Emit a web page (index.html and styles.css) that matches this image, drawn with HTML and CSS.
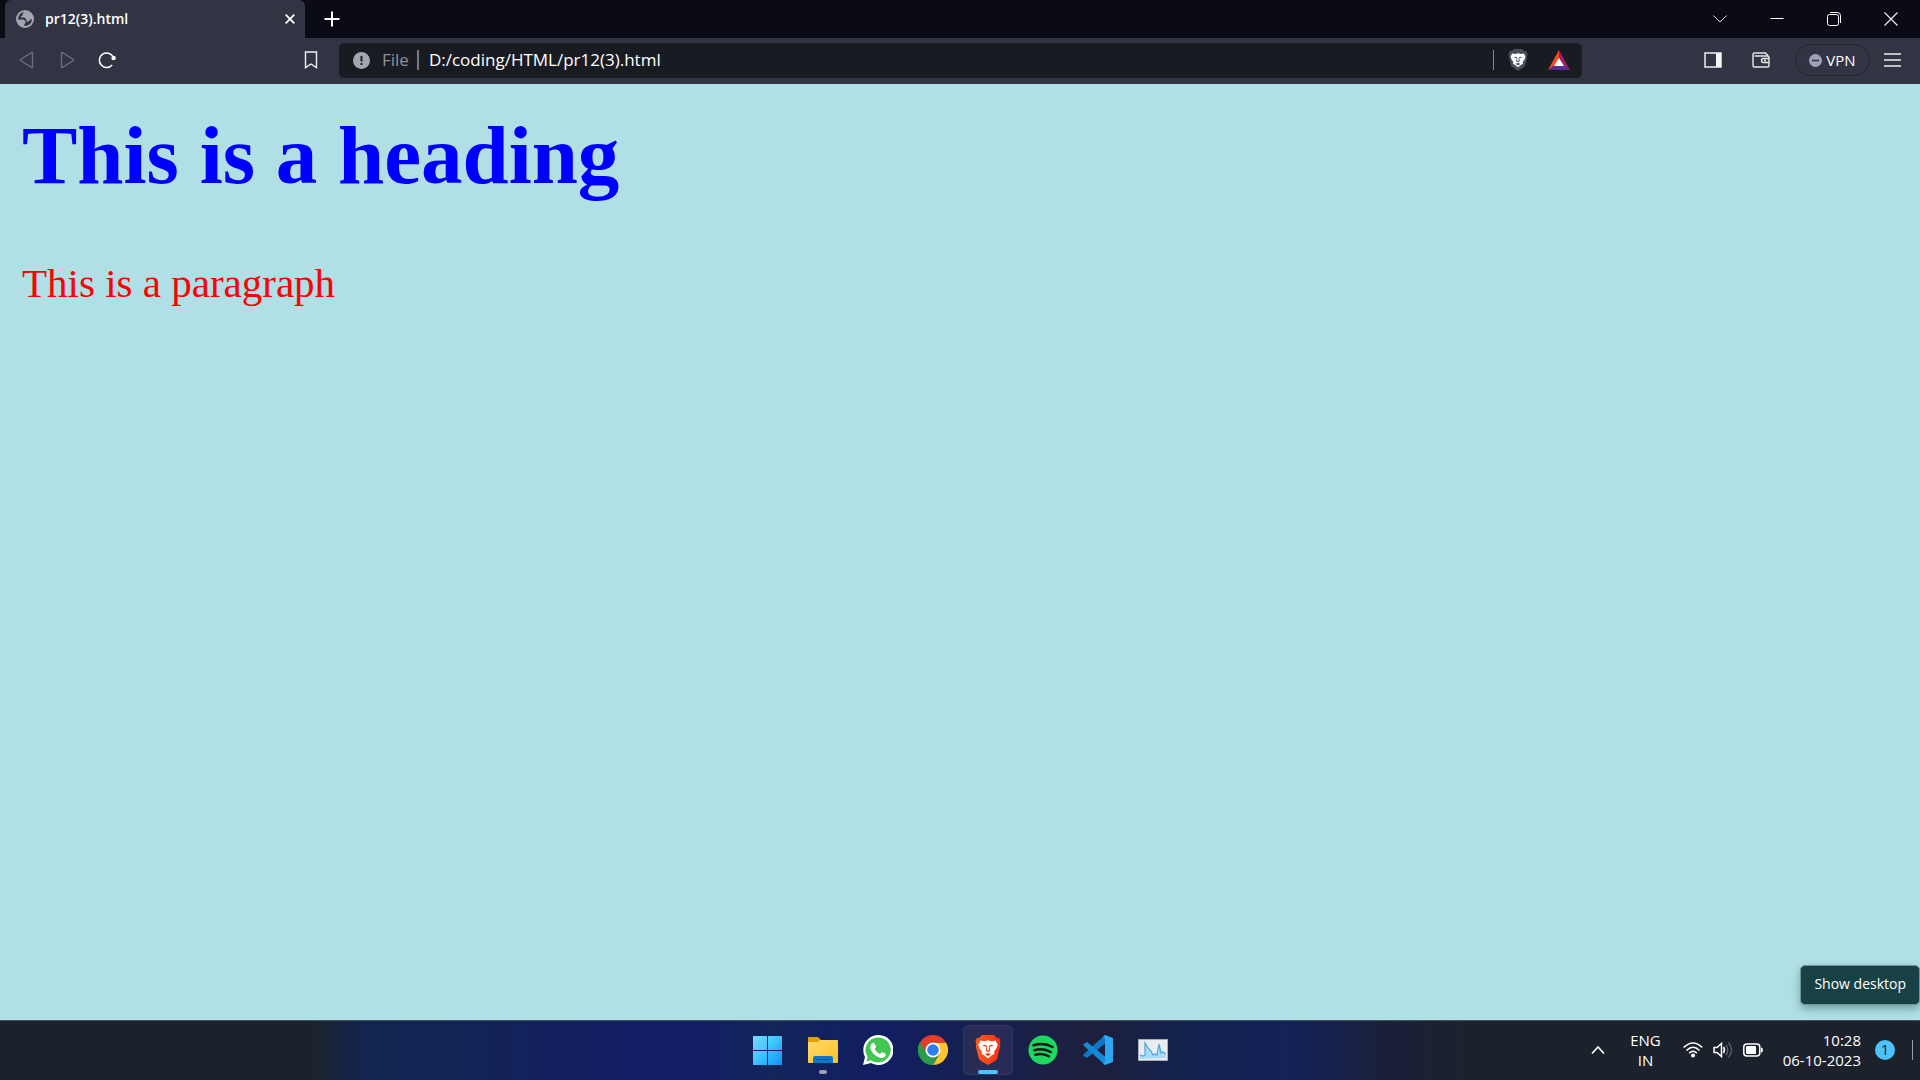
FILE: index.html
```html
<!DOCTYPE html>
<html lang="en">
<head>
<meta charset="utf-8">
<title>pr12(3).html</title>
<link rel="stylesheet" href="styles.css">
</head>
<body>
<svg class="defs" aria-hidden="true">
  <symbol id="lion" viewBox="0 0 24 24">
    <path fill="#fff" fill-rule="evenodd" d="M5 4.200 8.600 4.800 12 4 15.400 4.800 19 4.200 21 8 19.600 11.800 17.500 14.500 18 16.500 15.800 17.600 12 20.800 8.200 17.600 6 16.500 6.500 14.500 4.400 11.800 3 8ZM6.300 8.700 9.800 9.600 10.400 10.300 9.800 13.200 11.300 14.700H12.700L14.200 13.200 13.600 10.300 14.200 9.600 17.700 8.700 14.900 8 12.900 9V12.800L12 13.700 11.100 12.800V9L9.100 8ZM9 16.600 12 18.600 15 16.600 12 15.600Z"/>
  </symbol>
</svg>
<header class="browser">
  <div class="tabs">
    <div class="tab">
      <svg width="18" height="18" viewBox="0 0 18 18"><circle cx="9" cy="9" r="9" fill="#a3a5af"/><path d="M9 2 7 3 6.500 5.500 4.500 6.500 5.500 7.500H8.500L10.500 9.500V11.500H12.500L14.500 9.500 16 9A7 7 0 0 1 9 16L8 15 9 13 8.500 12H6L4.500 10.500 2 9A7 7 0 0 1 9 2Z" fill="#323443"/><path d="M4 9.500h3l2.500 1.500v2L7.500 14v2L4 14Z" fill="#a3a5af"/></svg>
      <span class="tab-title">pr12(3).html</span>
      <button class="icon" aria-label="Close tab"><svg width="10" height="10" viewBox="0 0 10 10"><path d="M.7.700 9.300 9.300M9.300.700.700 9.300" stroke="#fff" stroke-width="1.800"/></svg></button>
    </div>
    <button class="icon new-tab" aria-label="New tab"><svg width="16" height="16" viewBox="0 0 16 16"><path d="M8 .5v15M.5 8h15" stroke="#fff" stroke-width="2"/></svg></button>
    <div class="window-controls">
      <button class="icon" aria-label="Search tabs"><svg width="14" height="14" viewBox="0 0 14 14"><path d="M.5 3.500 7 10 13.500 3.500" fill="none" stroke="#ddd"/></svg></button>
      <button class="icon" aria-label="Minimize"><svg width="14" height="14" viewBox="0 0 14 14"><path d="M.5 6.500h13" stroke="#fff"/></svg></button>
      <button class="icon" aria-label="Restore"><svg width="14" height="14" viewBox="0 0 14 14"><rect x=".5" y="2.500" width="11" height="11" rx="2" fill="none" stroke="#fff"/><path d="M3 .5h7.500a3 3 0 0 1 3 3V11" fill="none" stroke="#fff"/></svg></button>
      <button class="icon" aria-label="Close"><svg width="14" height="14" viewBox="0 0 14 14"><path d="M.5.500l13 13M13.500.500l-13 13" stroke="#eee" stroke-width="1.200"/></svg></button>
    </div>
  </div>
  <div class="toolbar">
    <nav class="history">
      <button class="icon" aria-label="Back" disabled><svg width="18" height="18" viewBox="0 0 18 18"><path d="M14.500 2.500v13q0 1.500-1.500.6L3 9.800q-1-.8 0-1.600L13 1.900q1.500-.9 1.500.6Z" fill="none" stroke="#6c6e7c" stroke-width="1.400"/></svg></button>
      <button class="icon" aria-label="Forward" disabled><svg width="18" height="18" viewBox="0 0 18 18"><path d="M3.500 2.500v13q0 1.500 1.500.6L15 9.800q1-.8 0-1.600L5 1.900q-1.500-.9-1.500.6Z" fill="none" stroke="#6c6e7c" stroke-width="1.400"/></svg></button>
      <button class="icon" aria-label="Reload"><svg width="18" height="18" viewBox="0 0 18 18"><path d="M15.200 6A7.300 7.300 0 1 0 14.200 14" fill="none" stroke="#fff" stroke-width="1.500"/><circle cx="15.600" cy="7" r="2.200" fill="#fff"/></svg></button>
    </nav>
    <button class="icon" aria-label="Bookmark"><svg width="14" height="18" viewBox="0 0 14 18"><path d="M1.500 1h11v15.600L7 13l-5.500 3.600Z" fill="none" stroke="#eee" stroke-width="1.400"/></svg></button>
    <div class="address">
      <svg width="17" height="17" viewBox="0 0 17 17"><circle cx="8.500" cy="8.500" r="8.500" fill="#a3a5af"/><path d="M8.500 4v5.500M8.500 11v2" stroke="#1b1e27" stroke-width="2"/></svg>
      <label class="scheme" for="url">File</label>
      <input class="url" id="url" type="text" value="D:/coding/HTML/pr12(3).html">
      <div class="shields">
        <button class="icon" aria-label="Shields"><svg width="20" height="22" viewBox="0 0 20 22"><path d="M6 0h8l2 2h2l1.500 3-.5 3-2 9-7 5-7-5-2-9L.5 5 2 2h2Z" fill="#4a4d5e"/><use href="#lion" x="0" y="1" width="20" height="20"/></svg></button>
        <button class="icon" aria-label="Rewards"><svg width="22" height="20" viewBox="0 0 22 20"><path d="M11 0 0 20 11 12Z" fill="#ff4724"/><path d="M11 0 22 20 11 12Z" fill="#9e1f63"/><path d="M0 20h22L11 12Z" fill="#5c2d91"/><path d="M11 8 6 16h10Z" fill="#fff"/></svg></button>
      </div>
    </div>
    <div class="actions">
      <button class="icon" aria-label="Sidebar"><svg width="18" height="18" viewBox="0 0 18 18"><rect x="1" y="2" width="16" height="14" fill="none" stroke="#eee" stroke-width="1.500"/><path d="M12 2h5v14h-5Z" fill="#f4f4f4"/></svg></button>
      <button class="icon" aria-label="Wallet"><svg width="18" height="18" viewBox="0 0 18 18"><path d="M15.500 5V4L13.500 2h-11Q1 2 1 3.500v11Q1 16 2.500 16h13q1.500 0 1.500-1.500v-8Q17 5 15.500 5H2.500M17 7.500h-5.500q-2 0-2 2t2 2H17M12 9.500h2" fill="none" stroke="#e8e8e8" stroke-width="1.400"/></svg></button>
      <button class="vpn"><svg width="13" height="13" viewBox="0 0 13 13"><circle cx="6.500" cy="6.500" r="6.500" fill="#a0a1b8"/><path d="M3 6.500h7" stroke="#323443" stroke-width="1.600"/></svg>VPN</button>
      <button class="icon" aria-label="Menu"><svg width="17" height="14" viewBox="0 0 17 14"><path d="M0 1h17M0 7h17M0 13h17" stroke="#eee" stroke-width="1.500"/></svg></button>
    </div>
  </div>
</header>
<main class="page">
  <h1>This is a heading</h1>
  <p>This is a paragraph</p>
</main>
<footer class="taskbar">
  <div class="apps">
    <button class="app" aria-label="Start"><svg width="30" height="30" viewBox="0 0 30 30"><defs><linearGradient id="win" gradientUnits="userSpaceOnUse" x1="0" y1="0" x2="30" y2="30"><stop stop-color="#7cdcff"/><stop offset=".5" stop-color="#3cc3ff"/><stop offset="1" stop-color="#0a8ff5"/></linearGradient></defs><path fill="url(#win)" d="M0 1h14v14H0ZM15 1h14v14H15ZM0 16h14v14H0ZM15 16h14v14H15Z"/></svg></button>
    <button class="app running" aria-label="File Explorer"><svg width="30" height="30" viewBox="0 0 30 30"><defs><linearGradient id="fold" x2="1" y2="1"><stop stop-color="#ffda70"/><stop offset="1" stop-color="#ffc21f"/></linearGradient></defs><path fill="#e3a008" d="M0 3q0-1 1-1h9l3 3-2 3H0Z"/><path fill="url(#fold)" d="M0 7h10l2-2h17q1 0 1 1v21q0 1-1 1H1q-1 0-1-1Z"/><path fill="#0878c9" d="M5 28v-5q0-2 2-2h16q2 0 2 2v5Z"/><path d="M9 24.500h12" stroke="#084e86" stroke-width="1.200" stroke-linecap="round"/></svg></button>
    <button class="app" aria-label="WhatsApp"><svg width="30" height="30" viewBox="0 0 30 30"><path fill="#fff" d="M15 0a15 15 0 1 1-7 28L0 30l2-8A15 15 0 0 1 15 0Z"/><path fill="#43c654" d="M15 2.500A12.500 12.500 0 0 0 4.700 22L3.500 26.500 8 25.200A12.500 12.500 0 1 0 15 2.500Z"/><path fill="#fff" d="M9 8.500q1.500-1.500 2.500 0l1.500 3q.3 1-1.500 2.500 2 3.700 5.500 5 1.500-2 2.300-1.800l3.200 1.600q.8.700-.2 2.400-2 2.500-5.800 1.300-6.500-2.200-9-8.500-.8-3.500 1.500-5.500Z"/></svg></button>
    <button class="app" aria-label="Chrome"><svg width="30" height="30" viewBox="0 0 30 30"><path fill="#2a9b49" d="M15 15 2 7.500A15 15 0 0 0 15 30L21 18.500Z"/><path fill="#ffc42e" d="M15 7.500H28A15 15 0 0 1 15 30l6.500-11.300Z"/><path fill="#e43e2b" d="M2 7.500A15 15 0 0 1 28 7.500H15a7.500 7.500 0 0 0-6.500 11.300Z"/><path fill="#2a9b49" d="M2 7.500 8.500 18.800 15 22.500h3L15 30A15 15 0 0 1 2 7.500Z"/><circle cx="15" cy="15" r="7.500" fill="#fff"/><circle cx="15" cy="15" r="5.800" fill="#2f7df0"/></svg></button>
    <button class="app active" aria-label="Brave"><svg width="30" height="30" viewBox="0 0 30 30"><defs><linearGradient id="brave"><stop stop-color="#ff5a20"/><stop offset="1" stop-color="#fb3010"/></linearGradient></defs><path fill="url(#brave)" d="M9 0h12l3 3 2-.2L27.500 6l-.7 3 .5 2L24 24l-2 2-7 4-7-4-2-2L2.700 11l.5-2-.7-3L4 2.800 6 3Z"/><use href="#lion" x="2" y="1" width="26" height="26"/></svg></button>
    <button class="app" aria-label="Spotify"><svg width="30" height="30" viewBox="0 0 30 30"><circle cx="15" cy="15" r="14.500" fill="#1ed760"/><path d="M5.500 10.300Q16 7 24.500 12M6.500 15.300Q15 12.500 22.800 17M7.500 19.800Q14.500 17.500 20.800 21.300" fill="none" stroke="#0b1710" stroke-width="2.500" stroke-linecap="round"/></svg></button>
    <button class="app" aria-label="Visual Studio Code"><svg width="30" height="30" viewBox="0 0 30 30"><path fill="#0f79c5" d="M22 0v8.500L4 23 0 20.500 1 19Z"/><path fill="#1688d6" d="M22 30v-8.500L4 7 0 9.500 1 11Z"/><path fill="#2ba7f3" d="M22 0 30 3v24l-8 3-2-1.500 2-2v-23l-2-2Z"/></svg></button>
    <button class="app" aria-label="Resource Monitor"><svg width="30" height="30" viewBox="0 0 30 30"><path fill="#e9edf1" stroke="#a9afb8" d="M.5 4.500h29v21H.500Z"/><path fill="#a6dcf8" d="M2 24v-4l3 1 2-1V8l3 5 3 3 2 4 2-1 2 1 2-11 2 9 2-1 3 2v4Z"/><path d="M2 20l3 1 2-1V8l3 5 3 3 2 4 2-1 2 1 2-11 2 9 2-1 3 2" fill="none" stroke="#4ca6dc" stroke-width="1.200"/></svg></button>
  </div>
  <div class="tray">
    <button class="icon" aria-label="Hidden icons"><svg width="14" height="10" viewBox="0 0 14 10"><path d="M1 8.500 7 2l6 6.500" fill="none" stroke="#fff" stroke-width="1.700"/></svg></button>
    <button class="language">ENG<br>IN</button>
    <button class="status" aria-label="Network, volume and battery">
      <svg width="20" height="18" viewBox="0 0 20 18"><path d="M.7 6.500Q10-2.500 19.300 6.500M3.500 9.500Q10 3 16.500 9.500M6.200 12.300q3.800-4 7.600 0" fill="none" stroke="#fff" stroke-width="1.600"/><circle cx="10" cy="14.500" r="2" fill="#fff"/></svg>
      <svg width="20" height="18" viewBox="0 0 20 18"><path d="M1 6.500h3L8.500 2.500v13L4 11.500H1Z" fill="none" stroke="#fff" stroke-width="1.500"/><path d="M10.500 6q2 3 0 6" fill="none" stroke="#fff" stroke-width="1.500"/><path d="M13 4q3.500 5 0 10M15.500 1.500q6 7.500 0 15" fill="none" stroke="#59606b" stroke-width="1.400"/></svg>
      <svg width="20" height="14" viewBox="0 0 20 14"><rect x=".8" y="1" width="16" height="12" rx="3" fill="none" stroke="#fff" stroke-width="1.500"/><rect x="3" y="3" width="10" height="8" rx="1" fill="#fff"/><path d="M18 4.500q2 0 2 2.500t-2 2.500Z" fill="#fff"/></svg>
    </button>
    <button class="clock">10:28<br>06-10-2023</button>
    <button class="badge" aria-label="1 notification">1</button>
    <button class="peek" aria-label="Show desktop"></button>
  </div>
  <div class="tooltip" role="tooltip">Show desktop</div>
</footer>
</body>
</html>
```
FILE: styles.css
```css
* { box-sizing: border-box; }

body {
  margin: 0;
  min-height: 100vh;
  display: flex;
  flex-direction: column;
  background: #b0e0e6;
  font-family: "Open Sans", "Noto Sans", sans-serif;
}

button {
  border: 0;
  padding: 0;
  background: none;
  color: #fff;
  font: inherit;
}

svg { display: block; flex: none; }
.defs { position: absolute; width: 0; height: 0; }

.icon {
  display: flex;
  align-items: center;
  justify-content: center;
}

.tabs {
  display: flex;
  height: 38px;
  padding-left: 5px;
  background: #0b0b15;
}

.tab {
  display: flex;
  align-items: center;
  width: 300px;
  padding: 0 10px 0 11px;
  gap: 11px;
  border-radius: 6px 6px 0 0;
  background: #323443;
}

.tab-title {
  flex: 1;
  padding-bottom: 2px;
  color: #fff;
  font-size: 14px;
  font-weight: 600;
}

.new-tab { margin-left: 19px; }

.window-controls {
  display: flex;
  margin-left: auto;
  padding-right: 1px;
}

.window-controls .icon { width: 57px; }

.toolbar {
  display: flex;
  align-items: center;
  height: 46px;
  padding: 0 19px 2px 18px;
  background: #323443;
}

.history {
  display: flex;
  gap: 22px;
  margin-right: 188px;
}

.address {
  display: flex;
  flex: 1;
  align-items: center;
  height: 35px;
  margin-left: 21px;
  padding: 0 12px 0 14px;
  border-radius: 5px;
  background: #191b23;
  font-size: 17px;
}

.scheme {
  margin-left: 12px;
  padding-right: 8px;
  border-right: 2px solid #777981;
  color: #8f9198;
  line-height: 20px;
}

.url {
  flex: 1;
  min-width: 0;
  padding: 0 0 2px 10px;
  border: 0;
  outline: 0;
  background: none;
  color: #fff;
  font: inherit;
}

.shields {
  display: flex;
  align-items: center;
  gap: 20px;
  height: 20px;
  padding-left: 14px;
  border-left: 1px solid #888a90;
}

.actions {
  display: flex;
  align-items: center;
  margin-left: 122px;
}

.actions .icon + .icon { margin-left: 30px; }

.vpn {
  display: flex;
  align-items: center;
  justify-content: center;
  gap: 4px;
  width: 75px;
  height: 32px;
  margin: 0 14px 0 25px;
  border: 1px solid #222430;
  border-radius: 16px;
  font-size: 15px;
  line-height: 20px;
}

.page {
  flex: 1;
  padding: 23px 22px;
  font-family: "Liberation Serif", "Times New Roman", serif;
}

.page h1 {
  margin: 0 0 56px;
  color: #00f;
  font-size: 83px;
  line-height: 96px;
}

.page p {
  margin: 0;
  color: #f00;
  font-size: 41px;
  line-height: 48px;
}

.taskbar {
  position: relative;
  display: grid;
  grid-template-columns: 1fr auto 1fr;
  align-items: center;
  height: 60px;
  padding-bottom: 2px;
  border-top: 1px solid #46545e;
  background: linear-gradient(90deg, #1c222b 0%, #1c222b 16%, #12254f 19%, #12225a 27%, #121c68 35%, #13255a 40%, #111e62 46%, #16204f 51%, #1d1f3c 57%, #12224f 62%, #12225a 67%, #1b203a 72%, #1c222b 77%, #1c222b 100%);
}

.apps {
  grid-column: 2;
  display: flex;
  gap: 5px;
}

.app {
  position: relative;
  display: flex;
  align-items: center;
  justify-content: center;
  width: 50px;
  height: 50px;
  border-radius: 5px;
}

.active {
  border: 1px solid #353a62;
  background: #272b55;
}

.running::after,
.active::after {
  content: "";
  position: absolute;
  bottom: 1px;
  width: 8px;
  height: 4px;
  border-radius: 2px;
  background: #9da1b8;
}

.active::after {
  bottom: 0;
  width: 20px;
  background: #4cc2ff;
}

.tray {
  display: flex;
  align-items: center;
  justify-content: flex-end;
  padding-right: 7px;
  font-size: 15px;
  line-height: 20px;
}

.language { margin: 0 22px 0 25px; }

.status {
  display: flex;
  align-items: center;
  gap: 10px;
  margin-right: 20px;
}

.clock { text-align: right; }

.badge {
  width: 20px;
  height: 20px;
  margin: 0 17px 0 14px;
  border-radius: 10px;
  background: #4cc2ff;
  color: #14202b;
  font-size: 14px;
}

.peek {
  width: 1px;
  height: 20px;
  background: #9a9da2;
}

.tooltip {
  position: absolute;
  right: 0;
  bottom: 75px;
  padding: 8px 13px 11px;
  border: 1px solid #6d9498;
  border-radius: 5px;
  background: #184146;
  box-shadow: 0 4px 8px rgb(0 40 45 / 35%);
  color: #fff;
  font-size: 14px;
  line-height: 19px;
}
```
